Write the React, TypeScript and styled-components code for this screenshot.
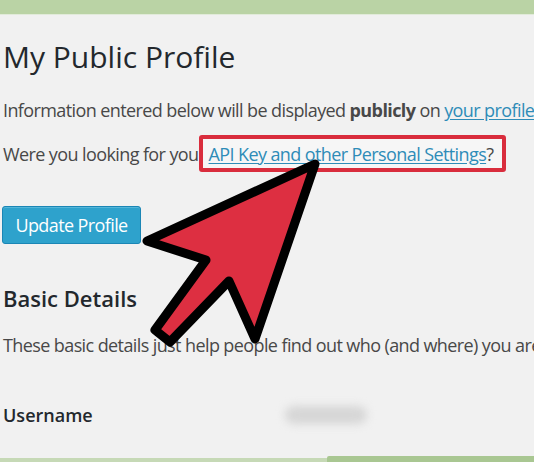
import React from "react";
import styled, { createGlobalStyle } from "styled-components";

const Global = createGlobalStyle`
  html, body { margin: 0; padding: 0; }
  body {
    width: 534px;
    height: 462px;
    overflow: hidden;
    background: #f1f1f1;
    font-family: "Open Sans", "Noto Sans", sans-serif;
    color: #333;
  }
`;

const Page = styled.div`
  position: relative;
  width: 534px;
  height: 462px;
  overflow: hidden;
  display: flex;
  flex-direction: column;
`;

const TopBar = styled.div`
  height: 14px;
  background: #bad3a5;
  border-bottom: 1px solid #e2ebda;
  flex-shrink: 0;
`;

const Content = styled.div`
  flex: 1;
  padding-left: 3px;
  display: flex;
  flex-direction: column;
  white-space: nowrap;
`;

const Title = styled.h1`
  margin: 24px 0 0;
  font-size: 30px;
  line-height: 36px;
  font-weight: 400;
  color: #23282d;
`;

const Para = styled.p<{ $top: number }>`
  margin: ${(p) => p.$top}px 0 0;
  font-size: 18px;
  line-height: 24px;
  color: #484848;
  letter-spacing: -0.6px;
`;

const LinkRow = styled.div`
  margin-top: 13px;
  display: flex;
  align-items: center;
  font-size: 18px;
  line-height: 24px;
  color: #484848;
  letter-spacing: -0.6px;
`;

const Link = styled.a`
  color: #2e8cb8;
  text-decoration: underline;
  text-underline-offset: 2px;
`;

const Highlight = styled.span`
  display: inline-flex;
  align-items: center;
  height: 37px;
  box-sizing: border-box;
  margin-left: 0;
  padding: 0 9px 0 6px;
  border: 4px solid #d92d3d;
  border-radius: 3px;
  background: #f6f6f6;
`;

const Button = styled.button`
  align-self: flex-start;
  margin: 34px 0 0 -1px;
  width: 139px;
  height: 38px;
  padding: 0;
  background: #2ea2cc;
  border: 1px solid #1b86b5;
  border-radius: 3px;
  box-shadow: inset 0 1px 0 rgba(120, 200, 230, 0.5);
  color: #fff;
  font-family: "Open Sans", "Noto Sans", sans-serif;
  font-size: 18px;
  letter-spacing: -0.6px;
`;

const Heading = styled.h2`
  margin: 39px 0 0;
  font-size: 22px;
  line-height: 30px;
  font-weight: 600;
  color: #23282d;
`;

const FieldRow = styled.div`
  margin-top: 45px;
  display: flex;
  align-items: center;
`;

const Label = styled.span`
  width: 282px;
  font-size: 18px;
  line-height: 26px;
  font-weight: 600;
  color: #23282d;
`;

const Blurred = styled.span`
  width: 82px;
  height: 18px;
  background: #d6d6d6;
  border-radius: 9px;
  filter: blur(4px);
`;

const BottomBar = styled.div`
  position: relative;
  height: 4px;
  background: #c6d9b6;
  flex-shrink: 0;
`;

const BottomTab = styled.div`
  position: absolute;
  left: 327px;
  right: 0;
  bottom: 0;
  height: 6px;
  background: #a9c792;
  border-top-left-radius: 2px;
`;

const ArrowSvg = styled.svg`
  position: absolute;
  left: 0;
  top: 0;
  pointer-events: none;
`;

export default function App() {
  return (
    <Page>
      <Global />
      <TopBar />
      <Content>
        <Title>My Public Profile</Title>
        <Para $top={23}>
          Information entered below will be displayed <b>publicly</b> on{" "}
          <Link>your profile</Link>
        </Para>
        <LinkRow>
          Were you looking for you
          <Highlight>
            <Link>API Key and other Personal Settings</Link>?
          </Highlight>
        </LinkRow>
        <Button>Update Profile</Button>
        <Heading>Basic Details</Heading>
        <Para $top={20}>
          These basic details just help people find out who (and where) you are
        </Para>
        <FieldRow>
          <Label>Username</Label>
          <Blurred />
        </FieldRow>
      </Content>
      <BottomBar>
        <BottomTab />
      </BottomBar>
      <ArrowSvg width="534" height="462" viewBox="0 0 534 462">
        <polygon
          points="315,164 147,241 206,260 155,330 170,342 229,281 255,339"
          fill="#dd2f41"
          stroke="#000"
          strokeWidth="9"
          strokeLinejoin="round"
        />
      </ArrowSvg>
    </Page>
  );
}
